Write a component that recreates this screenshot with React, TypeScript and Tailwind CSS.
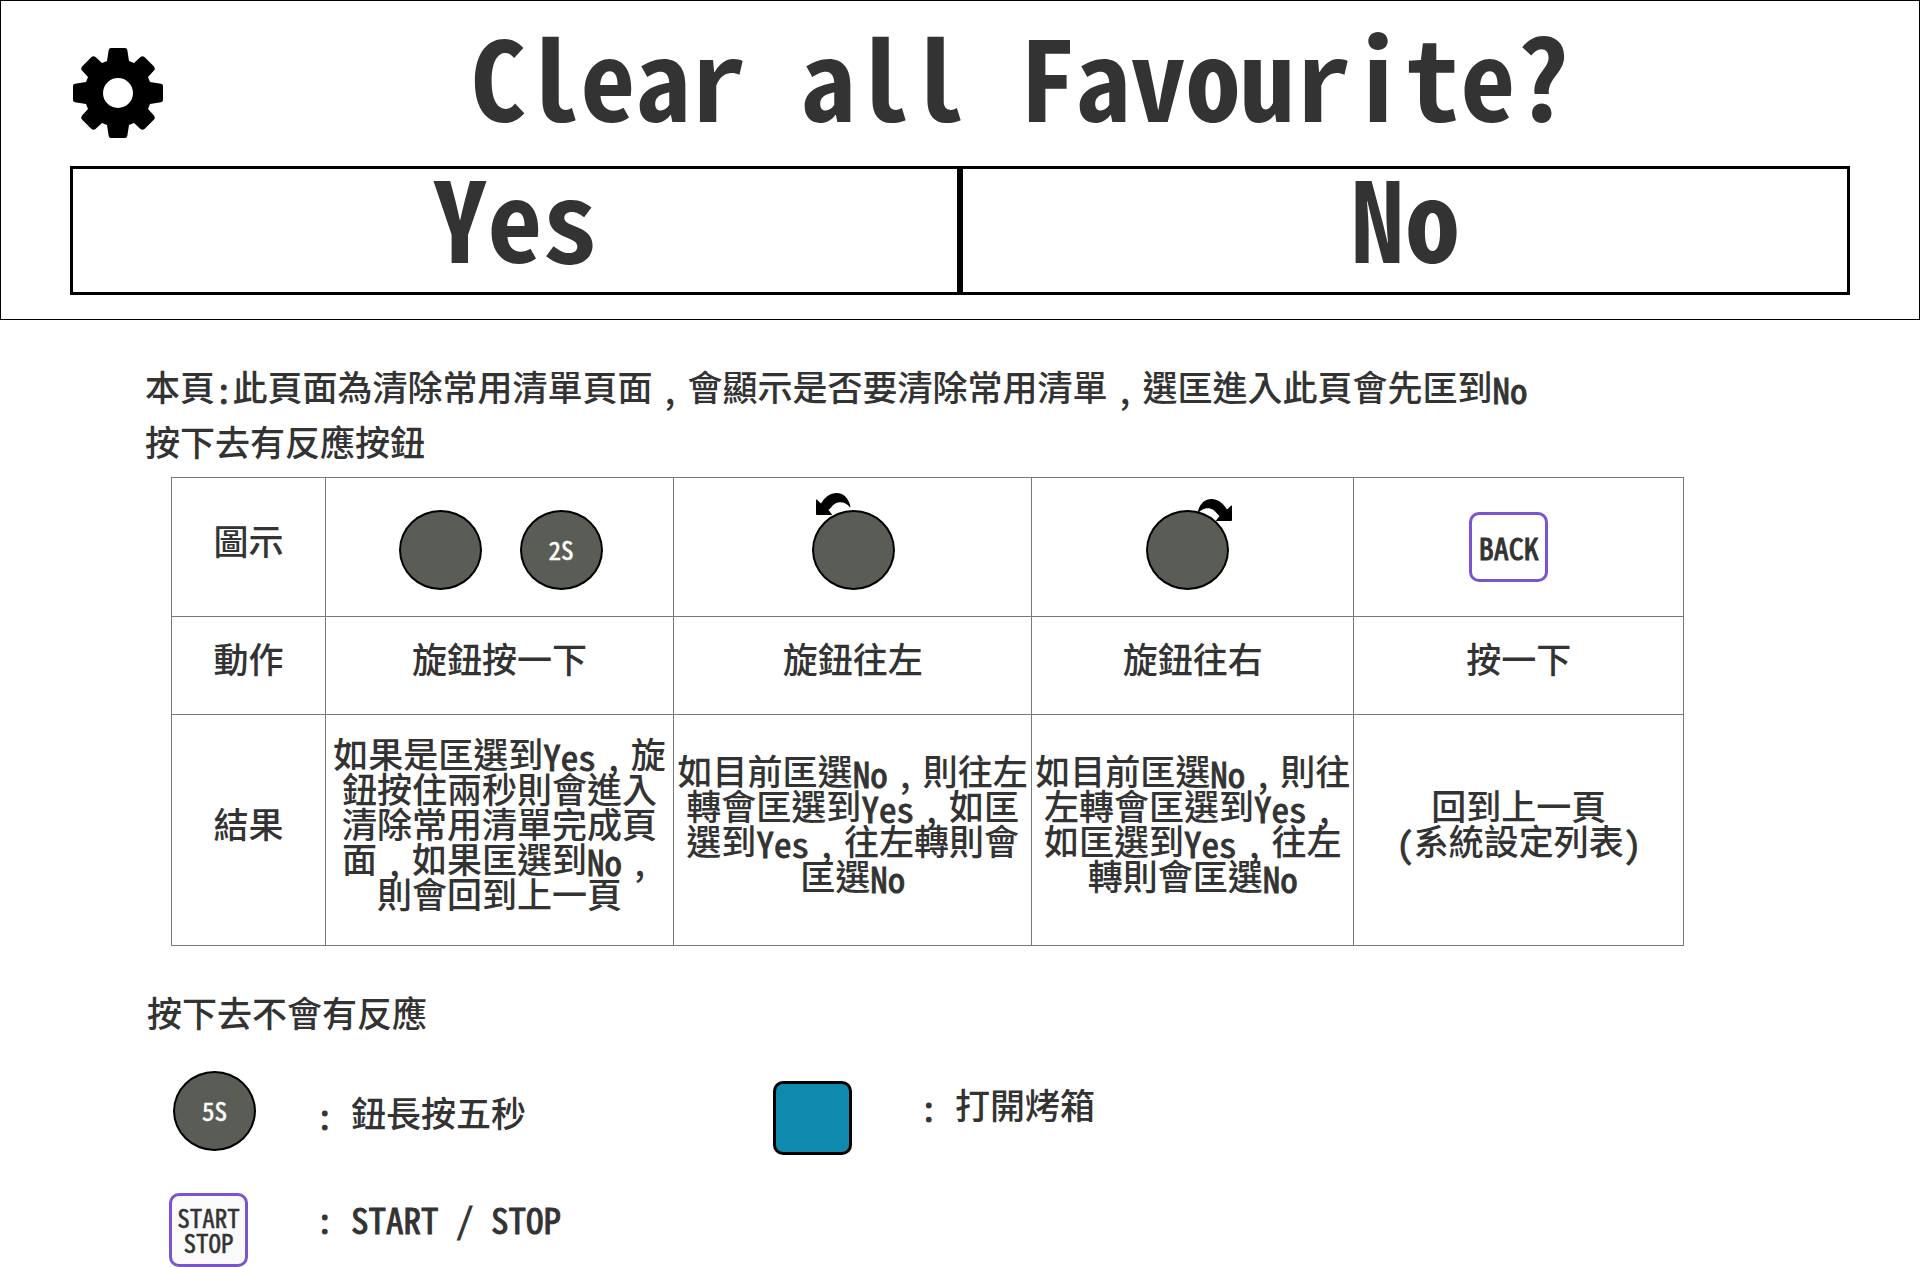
import type { ReactNode } from "react";

const MONO = "font-['Noto_Sans_Mono_CJK_TC','Noto_Sans_Mono',monospace]";

/* The half-width face has no medium weight; a thin stroke thickens the regular one. */
const MEDIUM = "[-webkit-text-stroke:1px_currentColor]";

/* Sets Chinese text with its Latin runs in the half-width face and its commas low in a full-width cell. */
function Mixed({ children }: { children: string }) {
  return (
    <>
      {children.split(/([\x20-\x7e]+|\uff0c)/).map((part, i) => {
        if (part === "\uff0c") {
          return (
            <span key={i} className="inline-block w-[35px] text-center align-[-3px] leading-[28px]">
              ,
            </span>
          );
        }
        if (/^[\x20-\x7e]+$/.test(part)) {
          return (
            <span key={i} className={`${MONO} ${MEDIUM} align-[-3px] leading-[28px] font-normal whitespace-pre`}>
              {part}
            </span>
          );
        }
        return part;
      })}
    </>
  );
}

function Lines({ lines }: { lines: string[] }) {
  return (
    <>
      {lines.map((line) => (
        <span key={line} className="block whitespace-nowrap">
          <Mixed>{line}</Mixed>
        </span>
      ))}
    </>
  );
}

function GearIcon() {
  return (
    <svg viewBox="0 0 90 90" className="size-[90px] shrink-0" aria-hidden="true">
      <path
        fillRule="evenodd"
        d="M38 0H52Q54 0 54.300 2L56 13L61 15L67.500 9Q69.500 7.500 71.500 9L81 18.500Q82.500 20.500 81 22.500L75 29L77 34L88 35.700Q90 36 90 38V52Q90 54 88 54.300L77 56L75 61L81 67.500Q82.500 69.500 81 71.500L71.500 81Q69.500 82.500 67.500 81L61 75L56 77L54.300 88Q54 90 52 90H38Q36 90 35.700 88L34 77L29 75L22.500 81Q20.500 82.500 18.500 81L9 71.500Q7.500 69.500 9 67.500L15 61L13 56L2 54.300Q0 54 0 52V38Q0 36 2 35.700L13 34L15 29L9 22.500Q7.500 20.500 9 18.500L18.500 9Q20.500 7.500 22.500 9L29 15L34 13L35.700 2Q36 0 38 0ZM45 30A15 15 0 1 0 45 60A15 15 0 1 0 45 30Z"
      />
    </svg>
  );
}

function TurnArrow({ className }: { className: string }) {
  return (
    <svg viewBox="0 0 35 22" className={`absolute h-[22px] w-[35px] fill-black ${className}`} aria-hidden="true">
      <path d="M0 7Q0 6 1 6.700L5 10.500C9 4 14.500 0 20.500 0C28 0 33 6 34.500 14C34.500 14.500 34 14.500 33.800 14C29 8 20 7 15 14.500L12.500 17L16 21.500Q16 22 15 22H1Q0 22 0 21Z" />
    </svg>
  );
}

function Knob({ label, children }: { label?: string; children?: ReactNode }) {
  return (
    <span
      className={`${MONO} relative inline-flex h-20 w-[83px] items-center justify-center rounded-[50%] border-2 border-black bg-[#5a5c56] pb-0.5 text-[25px] leading-none text-white [-webkit-text-stroke:0.5px_currentColor]`}
    >
      {label}
      {children}
    </span>
  );
}

function Th({ children }: { children: string }) {
  return (
    <th scope="row" className="border border-[#797979] p-0 pb-4 font-medium">
      {children}
    </th>
  );
}

function Td({ children, className = "pb-4" }: { children: ReactNode; className?: string }) {
  return <td className={`border border-[#797979] p-0 ${className}`}>{children}</td>;
}

export default function App() {
  return (
    <main className="bg-white font-['Noto_Sans_CJK_TC',sans-serif] text-[35px] font-medium text-[#333]">
      <section className="border border-black px-[69px] pb-6">
        <div className="flex items-start pl-[3px]">
          <div className="pt-[47px] text-black">
            <GearIcon />
          </div>
          <h1 className={`${MONO} ml-7 flex-1 pt-[18px] pb-[37px] text-center text-[110px] leading-[110px] font-bold`}>
            Clear all Favourite?
          </h1>
        </div>
        <div className={`${MONO} grid grid-cols-2 text-[110px] leading-[90px] font-bold`}>
          <button type="button" className="h-[129px] border-3 border-black pb-8">
            Yes
          </button>
          <button type="button" className="h-[129px] border-3 border-black pb-8">
            No
          </button>
        </div>
      </section>

      <div className="pt-[38px] pl-[145px] leading-[55px]">
        <p>
          <Mixed>本頁:此頁面為清除常用清單頁面，會顯示是否要清除常用清單，選匡進入此頁會先匡到No</Mixed>
        </p>
        <h2>按下去有反應按鈕</h2>
      </div>

      <div className="mt-[9px] pr-[236px] pl-[171px]">
        <table className="w-full table-fixed border-collapse text-center leading-[35px]">
          <colgroup>
            <col className="w-[10.2%]" />
            <col className="w-[23%]" />
            <col className="w-[23.7%]" />
            <col className="w-[21.3%]" />
            <col className="w-[21.8%]" />
          </colgroup>
          <tbody>
            <tr className="h-[139px]">
              <Th>圖示</Th>
              <Td className="pt-1.5 pl-0.5">
                <div className="flex justify-center gap-[38px]">
                  <Knob />
                  <Knob label="2S" />
                </div>
              </Td>
              <Td className="pt-1.5 pl-0.5">
                <div className="flex justify-center">
                  <Knob>
                    <TurnArrow className="-top-[19px] left-[2px]" />
                  </Knob>
                </div>
              </Td>
              <Td className="pt-1.5 pr-2.5">
                <div className="flex justify-center">
                  <Knob>
                    <TurnArrow className="-top-[13px] -right-[5px] -scale-x-100" />
                  </Knob>
                </div>
              </Td>
              <Td className="pr-5">
                <div className="flex justify-center">
                  <button
                    type="button"
                    className={`${MONO} ${MEDIUM} h-[70px] w-[79px] rounded-[10px] border-3 border-[#7953d2] text-[30px] leading-none font-normal`}
                  >
                    BACK
                  </button>
                </div>
              </Td>
            </tr>
            <tr className="h-[98px]">
              <Th>動作</Th>
              <Td>旋鈕按一下</Td>
              <Td>旋鈕往左</Td>
              <Td>旋鈕往右</Td>
              <Td>按一下</Td>
            </tr>
            <tr className="h-[231px]">
              <Th>結果</Th>
              <Td>
                <Lines
                  lines={[
                    "如果是匡選到Yes，旋",
                    "鈕按住兩秒則會進入",
                    "清除常用清單完成頁",
                    "面，如果匡選到No，",
                    "則會回到上一頁",
                  ]}
                />
              </Td>
              <Td>
                <Lines lines={["如目前匡選No，則往左", "轉會匡選到Yes，如匡", "選到Yes，往左轉則會", "匡選No"]} />
              </Td>
              <Td>
                <Lines lines={["如目前匡選No，則往", "左轉會匡選到Yes，", "如匡選到Yes，往左", "轉則會匡選No"]} />
              </Td>
              <Td>
                <Lines lines={["回到上一頁", "(系統設定列表)"]} />
              </Td>
            </tr>
          </tbody>
        </table>
      </div>

      <h2 className="pt-[38px] pl-[147px] leading-[55px]">按下去不會有反應</h2>

      <div className="mt-8 grid grid-cols-[34.5%_1fr] gap-y-[38px] pl-[169px] leading-[46px]">
        <div className="flex items-start">
          <div className="flex w-[147px] pl-1">
            <Knob label="5S" />
          </div>
          <p className="pt-[18px]">
            <Mixed>: 鈕長按五秒</Mixed>
          </p>
        </div>
        <div className="flex items-start pt-[10px]">
          <div className="w-[147px]">
            <button
              type="button"
              aria-label="打開烤箱"
              className="block h-[74px] w-[79px] rounded-[10px] border-3 border-black bg-[#0f8aae]"
            />
          </div>
          <p>
            <Mixed>: 打開烤箱</Mixed>
          </p>
        </div>
        <div className="flex items-start">
          <div className="w-[147px]">
            <button
              type="button"
              className={`${MONO} block h-[74px] w-[79px] rounded-[10px] border-3 border-[#7953d2] bg-[#fafafa] text-[25px] leading-[25px] font-normal [-webkit-text-stroke:0.5px_currentColor]`}
            >
              START
              <br />
              STOP
            </button>
          </div>
          <p>
            <Mixed>: START / STOP</Mixed>
          </p>
        </div>
      </div>
    </main>
  );
}
